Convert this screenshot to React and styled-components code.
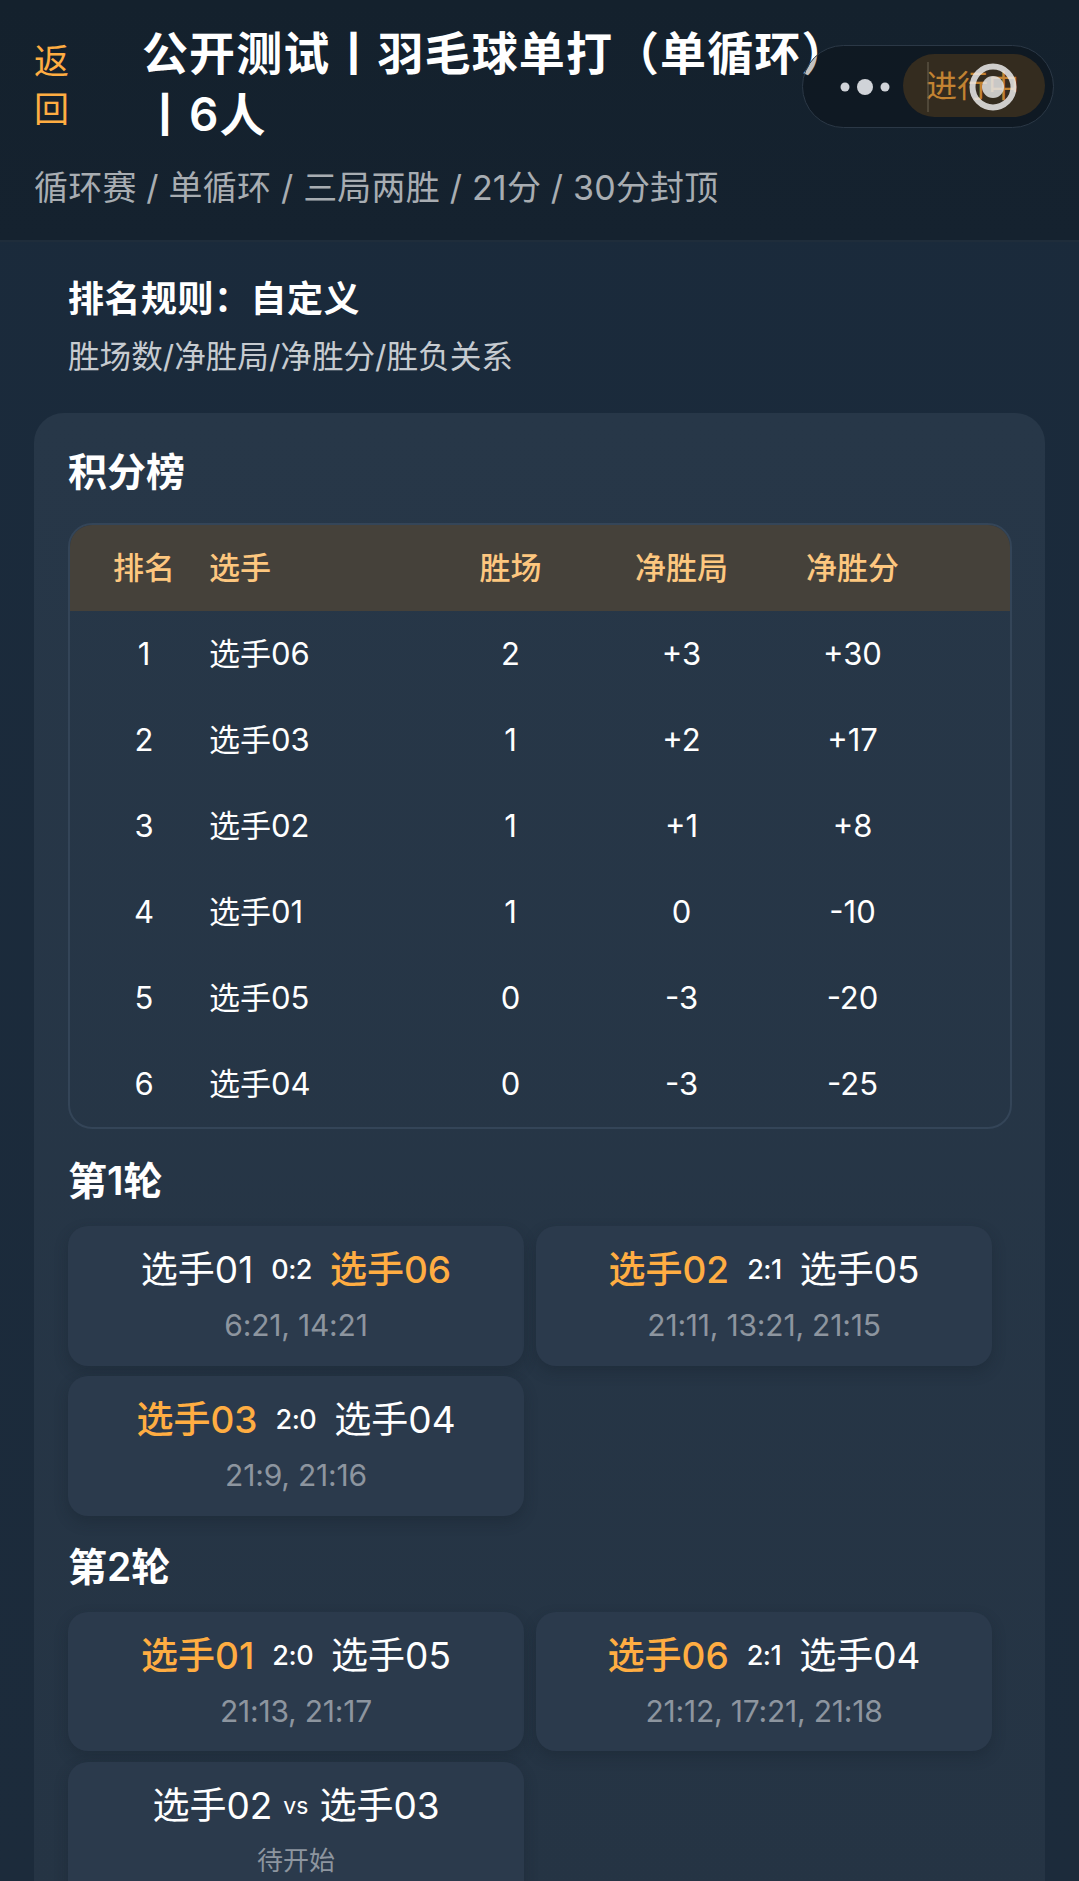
import React from "react";
import styled, { createGlobalStyle } from "styled-components";

const GlobalStyle = createGlobalStyle`
  html, body {
    margin: 0;
    padding: 0;
    background: #1b2a3b;
  }
  body {
    font-family: "Inter", "Noto Sans CJK SC", sans-serif;
    overflow: hidden;
  }
  * {
    box-sizing: border-box;
  }
`;

const Page = styled.div`
  position: relative;
  width: 1079px;
  height: 1881px;
  overflow: hidden;
  background: linear-gradient(180deg, #1a2a3b 0%, #1c2b3b 100%);
`;

const Header = styled.header`
  height: 242px;
  padding: 23px 34px 0;
  background: linear-gradient(180deg, #14212d 0%, #15222f 100%);
  border-bottom: 2px solid #1f2d3b;
`;

const TopRow = styled.div`
  display: flex;
  align-items: flex-start;
`;

const BackLink = styled.div`
  flex: 0 0 36px;
  margin: 14px 72px 0 0;
  font-size: 35px;
  line-height: 48px;
  color: #ffad42;
`;

const Title = styled.h1`
  flex: 1;
  margin: 0;
  padding-right: 40px;
  font-size: 46px;
  line-height: 61px;
  letter-spacing: 1.1px;
  font-weight: 600;
  color: #fff;
`;

const StatusPill = styled.div`
  flex: 0 0 142px;
  height: 63px;
  margin-top: 31px;
  padding-left: 23px;
  border-radius: 32px;
  background: #453a2a;
  color: #ffad42;
  font-size: 31px;
  line-height: 63px;
`;

const Subtitle = styled.div`
  margin-top: 19px;
  font-size: 34px;
  line-height: 48px;
  letter-spacing: 0.2px;
  color: #a8adb2;
`;

/* mini program capsule, sits on top of the header */
const Capsule = styled.div`
  position: absolute;
  top: 45px;
  left: 802px;
  width: 252px;
  height: 83px;
  border-radius: 42px;
  border: 1px solid #2b3846;
  background: rgba(0, 0, 0, 0.24);
`;

const CapsuleSvg = styled.svg`
  display: block;
`;

const Content = styled.main`
  padding: 32px 34px 0;
`;

const RuleBlock = styled.section`
  padding: 0 34px;
`;

const RuleTitle = styled.div`
  font-size: 36px;
  line-height: 50px;
  letter-spacing: 0.5px;
  font-weight: 600;
  color: #fff;
`;

const RuleText = styled.div`
  margin-top: 11px;
  font-size: 31.6px;
  line-height: 44px;
  color: #c6cbd0;
`;

const Card = styled.section`
  margin-top: 34px;
  height: 1500px;
  padding: 34px 33px 0 34px;
  border-radius: 30px;
  background: linear-gradient(180deg, #273748 0%, #253444 100%);
`;

const SectionTitle = styled.h2`
  margin: 0;
  font-size: 39px;
  line-height: 50px;
  font-weight: 600;
  color: #fff;
`;

const Table = styled.div`
  margin-top: 26px;
  height: 606px;
  border: 2px solid #344558;
  border-radius: 24px;
  overflow: hidden;
`;

const TableRow = styled.div`
  display: grid;
  grid-template-columns: 130px 216px 171px 171px 171px;
  align-items: center;
  padding-left: 9px;
  height: 86px;
  background: ${(p) => (p.$head ? "#45413a" : "transparent")};
  color: ${(p) => (p.$head ? "#fdc77f" : "#fff")};
  font-size: 31px;
  line-height: 40px;
  font-weight: ${(p) => (p.$head ? 500 : 400)};
`;

const Cell = styled.div`
  text-align: ${(p) => (p.$left ? "left" : "center")};
`;

const RoundTitle = styled(SectionTitle)`
  margin-top: ${(p) => p.$top}px;
`;

const MatchGrid = styled.div`
  display: grid;
  grid-template-columns: 456px 456px;
  grid-auto-rows: 139.5px;
  gap: 10.5px 12px;
  margin-top: 20px;
`;

const MatchCard = styled.div`
  display: flex;
  flex-direction: column;
  align-items: center;
  padding-top: 16px;
  border-radius: 20px;
  background: #2b3a4c;
  box-shadow: 0 6px 14px rgba(20, 30, 40, 0.3);
`;

const Players = styled.div`
  display: flex;
  align-items: center;
  justify-content: center;
  gap: ${(p) => (p.$pending ? 11 : 18)}px;
  height: 56px;
  line-height: 56px;
`;

const PlayerName = styled.span`
  font-size: 37px;
  font-weight: ${(p) => (p.$win ? 500 : 400)};
  color: ${(p) => (p.$win ? "#ffad42" : "#fff")};
`;

const Score = styled.span`
  font-size: 27px;
  font-weight: 500;
  letter-spacing: -0.5px;
  color: #fff;
`;

const Versus = styled.span`
  font-size: 23px;
  color: #fff;
`;

const Detail = styled.div`
  margin-top: 2px;
  font-size: ${(p) => (p.$pending ? 26 : 30)}px;
  line-height: 50px;
  letter-spacing: ${(p) => (p.$pending ? 0 : -0.2)}px;
  color: #8d959f;
`;

const standings = [
  [1, "选手06", 2, "+3", "+30"],
  [2, "选手03", 1, "+2", "+17"],
  [3, "选手02", 1, "+1", "+8"],
  [4, "选手01", 1, "0", "-10"],
  [5, "选手05", 0, "-3", "-20"],
  [6, "选手04", 0, "-3", "-25"],
];

const rounds = [
  {
    title: "第1轮",
    top: 27,
    matches: [
      { a: "选手01", b: "选手06", score: "0:2", win: "b", detail: "6:21, 14:21" },
      { a: "选手02", b: "选手05", score: "2:1", win: "a", detail: "21:11, 13:21, 21:15" },
      { a: "选手03", b: "选手04", score: "2:0", win: "a", detail: "21:9, 21:16" },
    ],
  },
  {
    title: "第2轮",
    top: 26,
    matches: [
      { a: "选手01", b: "选手05", score: "2:0", win: "a", detail: "21:13, 21:17" },
      { a: "选手06", b: "选手04", score: "2:1", win: "a", detail: "21:12, 17:21, 21:18" },
      { a: "选手02", b: "选手03", detail: "待开始", pending: true },
    ],
  },
];

const Match = ({ a, b, score, win, detail, pending }) => (
  <MatchCard>
    <Players $pending={pending}>
      <PlayerName $win={win === "a"}>{a}</PlayerName>
      {pending ? <Versus>vs</Versus> : <Score>{score}</Score>}
      <PlayerName $win={win === "b"}>{b}</PlayerName>
    </Players>
    <Detail $pending={pending}>{detail}</Detail>
  </MatchCard>
);

export default function App() {
  return (
    <Page>
      <GlobalStyle />
      <Header>
        <TopRow>
          <BackLink>返回</BackLink>
          <Title>公开测试丨羽毛球单打（单循环）丨6人</Title>
          <StatusPill>进行中</StatusPill>
        </TopRow>
        <Subtitle>循环赛 / 单循环 / 三局两胜 / 21分 / 30分封顶</Subtitle>
      </Header>
      <Capsule>
        <CapsuleSvg width="250" height="81" viewBox="0 0 250 81">
          <circle cx="42" cy="41" r="4.5" fill="#d0d3d8" />
          <circle cx="62" cy="41" r="8" fill="#d0d3d8" />
          <circle cx="82" cy="41" r="4.5" fill="#d0d3d8" />
          <line x1="125" y1="16" x2="125" y2="66" stroke="#6b6252" strokeWidth="1" />
          <g opacity="0.85">
            <circle cx="190" cy="41" r="20.5" fill="none" stroke="#eaeaea" strokeWidth="6" />
            <circle cx="190" cy="41" r="11" fill="#e4e4e4" />
          </g>
        </CapsuleSvg>
      </Capsule>
      <Content>
        <RuleBlock>
          <RuleTitle>排名规则：自定义</RuleTitle>
          <RuleText>胜场数/净胜局/净胜分/胜负关系</RuleText>
        </RuleBlock>
        <Card>
          <SectionTitle>积分榜</SectionTitle>
          <Table>
            <TableRow $head>
              <Cell>排名</Cell>
              <Cell $left>选手</Cell>
              <Cell>胜场</Cell>
              <Cell>净胜局</Cell>
              <Cell>净胜分</Cell>
            </TableRow>
            {standings.map((row) => (
              <TableRow key={row[0]}>
                {row.map((value, i) => (
                  <Cell key={i} $left={i === 1}>
                    {value}
                  </Cell>
                ))}
              </TableRow>
            ))}
          </Table>
          {rounds.map((round) => (
            <React.Fragment key={round.title}>
              <RoundTitle $top={round.top}>{round.title}</RoundTitle>
              <MatchGrid>
                {round.matches.map((m) => (
                  <Match key={m.a + m.b} {...m} />
                ))}
              </MatchGrid>
            </React.Fragment>
          ))}
        </Card>
      </Content>
    </Page>
  );
}
